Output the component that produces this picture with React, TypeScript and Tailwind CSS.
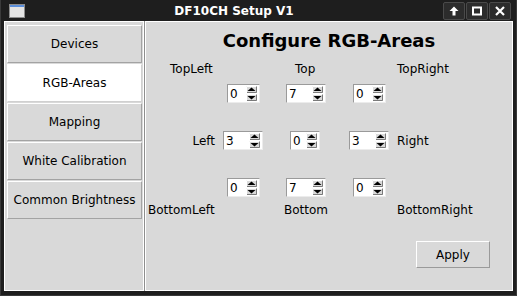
import { ReactNode } from "react"

const navItems = ["Devices", "RGB-Areas", "Mapping", "White Calibration", "Common Brightness"]

function SpinArrows() {
    return (
        <svg width="11" height="15" viewBox="0 0 11 15" className="shrink-0">
            <rect x="0" y="0" width="11" height="7" fill="#d9d9d9" />
            <path d="M0 6.5H10.5V0" stroke="#7a7a7a" fill="none" />
            <path d="M0.5 7V0.5H10.5" stroke="#ffffff" fill="none" />
            <polygon points="1.5,5 5.5,1.5 9.5,5" fill="#000" />
            <rect x="0" y="8" width="11" height="7" fill="#d9d9d9" />
            <path d="M0 14.5H10.5V8" stroke="#7a7a7a" fill="none" />
            <path d="M0.5 15V8.5H10.5" stroke="#ffffff" fill="none" />
            <polygon points="1.5,10 5.5,13.5 9.5,10" fill="#000" />
        </svg>
    )
}

function Spin({ value, w }: { value: string; w: string }) {
    return (
        <div className={`${w} h-[19px] shrink-0 flex items-center justify-between bg-white border border-t-[#9a9a9a] border-l-[#9a9a9a] border-b-[#ececec] border-r-[#ececec] pl-[2px] pr-[2px]`}>
            <span className="text-[12px] leading-[14px] text-black">{value}</span>
            <SpinArrows />
        </div>
    )
}

function TitleButton({ children }: { children: ReactNode }) {
    return (
        <div className="w-[22px] h-[18px] flex items-center justify-center rounded-[2px] border border-[#4a4a4a] bg-[#2c2c2c]">
            {children}
        </div>
    )
}

export default function App() {
    return (
        <div className="w-[517px] h-[296px] bg-[#1e1e1e] flex flex-col overflow-hidden font-['DejaVu_Sans',sans-serif] border-l border-r border-b border-[#3a3a3a]">
            {/* title bar */}
            <div className="h-[21px] shrink-0 flex items-center pl-[8px] pr-[5px]">
                <div className="w-[16px] h-[14px] border border-[#8c8c8c] bg-[#e4e4e4] flex flex-col">
                    <div className="h-[2px] bg-[#5b8fdc]" />
                </div>
                <div className="flex-1 text-center text-white font-bold text-[12px] leading-[14px]">DF10CH Setup V1</div>
                <div className="flex gap-px pt-px">
                    <TitleButton>
                        <svg width="10" height="10" viewBox="0 0 10 10">
                            <polygon points="5,0.5 9.5,5 6.5,5 6.5,9.5 3.5,9.5 3.5,5 0.5,5" fill="#fff" />
                        </svg>
                    </TitleButton>
                    <TitleButton>
                        <svg width="10" height="10" viewBox="0 0 10 10">
                            <rect x="1" y="1.5" width="8" height="7" stroke="#fff" strokeWidth="2" fill="none" />
                        </svg>
                    </TitleButton>
                    <TitleButton>
                        <svg width="10" height="10" viewBox="0 0 10 10">
                            <path d="M1 1L9 9M9 1L1 9" stroke="#fff" strokeWidth="2.2" />
                        </svg>
                    </TitleButton>
                </div>
            </div>

            {/* body */}
            <div className="ml-[3px] w-[509px] h-[270px] flex bg-[#d9d9d9]">
                <div className="w-[140px] h-full border border-white flex flex-col gap-px pt-[3px] pl-[2px] pr-px">
                    {navItems.map((item) => (
                        <div
                            key={item}
                            className={`w-[135px] h-[38px] flex items-center justify-center text-[12px] leading-[14px] text-black border border-t-white border-l-white border-b-[#a3a3a3] border-r-[#a3a3a3] ${item === "RGB-Areas" ? "bg-white border-b-[#d0d0d0] border-r-[#d0d0d0]" : "bg-[#d9d9d9]"}`}
                        >
                            {item}
                        </div>
                    ))}
                </div>
                <div className="w-px h-full bg-[#8e8e8e]" />
                <div className="flex-1 h-full border border-white flex flex-col text-[12px] leading-[14px] text-black">
                    <div className="pt-[8px] text-center font-bold text-[18px] leading-[22px]">Configure RGB-Areas</div>

                    <div className="mt-[10px] flex pl-[24px]">
                        <span className="w-[125px]">TopLeft</span>
                        <span className="w-[102px]">Top</span>
                        <span>TopRight</span>
                    </div>

                    <div className="mt-[8px] flex pl-[81px]">
                        <Spin value="0" w="w-[33px]" />
                        <div className="w-[26px]" />
                        <Spin value="7" w="w-[40px]" />
                        <div className="w-[27px]" />
                        <Spin value="0" w="w-[33px]" />
                    </div>

                    <div className="mt-[28px] flex items-center">
                        <span className="w-[69px] text-right">Left</span>
                        <div className="w-[8px]" />
                        <Spin value="3" w="w-[40px]" />
                        <div className="w-[27px]" />
                        <Spin value="0" w="w-[30px]" />
                        <div className="w-[29px]" />
                        <Spin value="3" w="w-[40px]" />
                        <span className="pl-[8px]">Right</span>
                    </div>

                    <div className="mt-[28px] flex pl-[81px]">
                        <Spin value="0" w="w-[33px]" />
                        <div className="w-[26px]" />
                        <Spin value="7" w="w-[40px]" />
                        <div className="w-[27px]" />
                        <Spin value="0" w="w-[33px]" />
                    </div>

                    <div className="mt-[6px] flex pl-[2px]">
                        <span className="w-[136px]">BottomLeft</span>
                        <span className="w-[113px]">Bottom</span>
                        <span>BottomRight</span>
                    </div>

                    <div className="mt-[24px] pl-[270px]">
                        <div className="w-[74px] h-[27px] flex items-center justify-center border border-t-white border-l-white border-b-[#9a9a9a] border-r-[#9a9a9a]">
                            Apply
                        </div>
                    </div>
                </div>
            </div>
        </div>
    )
}
